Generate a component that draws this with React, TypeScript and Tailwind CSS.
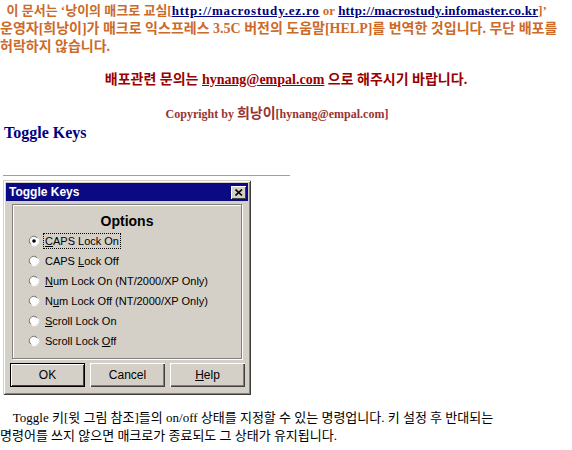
const serifKr = { fontFamily: '"Liberation Serif", "Noto Sans CJK KR", serif' };

type Opt = { label: React.ReactNode; checked?: boolean };

const options: Opt[] = [
  { label: <><u>C</u>APS Lock On</>, checked: true },
  { label: <>CAPS <u>L</u>ock Off</> },
  { label: <><u>N</u>um Lock On (NT/2000/XP Only)</> },
  { label: <>N<u>u</u>m Lock Off (NT/2000/XP Only)</> },
  { label: <><u>S</u>croll Lock On</> },
  { label: <>Scroll Lock <u>O</u>ff</> },
];

const Radio = ({ checked }: { checked?: boolean }) => (
  <svg width="12" height="12" viewBox="0 0 12 12" className="shrink-0">
    <path d="M8 1.5A5 5 0 0 0 1.5 8" stroke="#808080" fill="none" />
    <path d="M9 2.5A5.5 5.5 0 0 0 2.5 9" stroke="#404040" fill="none" />
    <circle cx="6" cy="6" r="4" fill="#fff" />
    <path d="M10.5 4A5 5 0 0 1 4 10.5" stroke="#ffffff" fill="none" />
    {checked && <circle cx="6" cy="6" r="1.8" fill="#000" />}
  </svg>
);

const Btn = ({ children, def }: { children: React.ReactNode; def?: boolean }) => (
  <div
    className={
      "flex h-[24px] w-[75px] items-center justify-center bg-[#d4d0c8] text-[12px] text-black " +
      (def
        ? "border border-black shadow-[inset_1px_1px_0_#fff,inset_-1px_-1px_0_#404040]"
        : "shadow-[inset_1px_1px_0_#fff,inset_-1px_-1px_0_#404040,inset_-2px_-2px_0_#808080]")
    }
  >
    {children}
  </div>
);

export default function App() {
  return (
    <div className="h-[450px] w-[572px] overflow-hidden bg-white">
      <p
        className="pt-[2px] text-[13px] font-bold leading-[18px] text-[#cc6a2a]"
        style={serifKr}
      >
        &nbsp; 이 문서는 ‘낭이의 매크로 교실[
        <a className="tracking-[0.8px] text-[#000080] underline">http://macrostudy.ez.ro</a> or{" "}
        <a className="tracking-[0.2px] text-[#000080] underline">http://macrostudy.infomaster.co.kr</a>]’
        <br />
        <span className="text-[14px]">
          운영자[희낭이]가 매크로 익스프레스 3.5C 버전의 도움말[HELP]를 번역한 것입니다. 무단 배포를
          <br />
          허락하지 않습니다.
        </span>
      </p>

      <div className="mt-[15px] text-center" style={serifKr}>
        <p className="text-[14px] font-bold leading-[18px] text-[#990000]">
          배포관련 문의는 <a className="underline">hynang@empal.com</a> 으로 해주시기 바랍니다.
        </p>
        <p className="mt-[16px] w-[554px] text-[12px] font-bold leading-[18px] text-[#993333]">
          Copyright by <span className="text-[14px]">희낭이</span>[hynang@empal.com]
        </p>
      </div>

      <h2
        className="pl-[4px] text-[16px] font-bold leading-[20px] text-[#000080]"
        style={{ fontFamily: '"Liberation Serif", serif' }}
      >
        Toggle Keys
      </h2>

      <div className="ml-[3px] mt-[32px] h-[2px] w-[287px] border-t border-[#a0a0a0] border-b-white" />

      <div
        className="ml-[3px] mt-[3px] flex h-[215px] w-[248px] flex-col bg-[#d4d0c8] p-[3px] shadow-[inset_1px_1px_0_#d4d0c8,inset_-1px_-1px_0_#404040,inset_2px_2px_0_#fff,inset_-2px_-2px_0_#808080]"
        style={{ fontFamily: '"Liberation Sans", Arial, sans-serif' }}
      >
        <div className="flex h-[18px] items-center justify-between bg-[#0a0a82] pl-[3px] pr-[2px]">
          <span className="text-[12px] font-bold text-white">Toggle Keys</span>
          <div className="flex h-[13px] w-[15px] items-center justify-center bg-[#d4d0c8] shadow-[inset_1px_1px_0_#fff,inset_-1px_-1px_0_#404040]">
            <svg width="8" height="7" viewBox="0 0 8 7">
              <path d="M0.5 0.5L7 6.5M7 0.5L0.5 6.5" stroke="#000" strokeWidth="1.6" />
            </svg>
          </div>
        </div>

        <div className="mx-[6px] mt-[3px] flex h-[155px] flex-col border border-[#808080] shadow-[inset_1px_1px_0_#fff,1px_1px_0_#fff]">
          <div className="mt-[7px] text-center text-[14px] font-bold leading-[18px] text-black">
            Options
          </div>
          <div className="mt-[1px] flex flex-col pl-[15px]">
            {options.map((o, i) => (
              <div key={i} className="flex h-[20px] items-center gap-[4px] text-[11px] text-black">
                <Radio checked={o.checked} />
                <span
                  className={
                    "px-[1px] leading-[14px] " +
                    (o.checked ? "outline outline-1 outline-dotted outline-black" : "")
                  }
                >
                  {o.label}
                </span>
              </div>
            ))}
          </div>
        </div>

        <div className="mt-[4px] flex gap-[5px] pl-[4px]">
          <Btn def>OK</Btn>
          <Btn>Cancel</Btn>
          <Btn>
            <span>
              <u>H</u>elp
            </span>
          </Btn>
        </div>
      </div>

      <p className="mt-[14px] text-[13px] leading-[18px] text-black" style={serifKr}>
        &nbsp;&nbsp;&nbsp; Toggle 키[윗 그림 참조]들의 on/off 상태를 지정할 수 있는 명령업니다. 키 설정 후 반대되는
        <br />
        명령어를 쓰지 않으면 매크로가 종료되도 그 상태가 유지됩니다.
      </p>
    </div>
  );
}
